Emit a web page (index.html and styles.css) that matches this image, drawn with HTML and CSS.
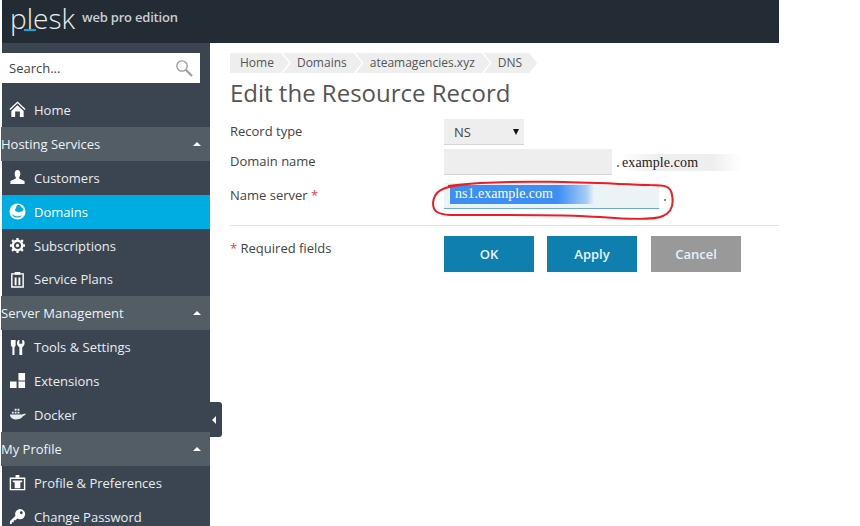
FILE: index.html
```html
<!DOCTYPE html>
<html lang="en">
<head>
<meta charset="utf-8">
<title>Edit the Resource Record</title>
<link rel="stylesheet" href="styles.css">
</head>
<body>
<div class="page">
  <header class="topbar">
    <div class="logo"><span class="logo-word">plesk</span><span class="logo-dash"></span></div>
    <span class="edition">web pro edition</span>
  </header>
  <div class="body-row">
    <aside class="sidebar">
      <div class="search"><span>Search...</span>
        <svg class="search-icon" viewBox="0 0 18 18" width="18" height="18"><circle cx="7" cy="7" r="5.2" fill="none" stroke="#9a9a9a" stroke-width="1.3"/><path d="M11 11l6 6" stroke="#9a9a9a" stroke-width="2"/></svg>
      </div>
      <nav>
        <a class="item"><svg class="ico" viewBox="0 0 18 18"><path d="M9 .5L.5 8.500l1 1L9 2.500l7.500 7 1-1zM2.500 10.500L9 4.500l6.500 6V17h-4v-6h-5v6h-4z" fill="#fff"/></svg>Home</a>
        <div class="group">Hosting Services<i class="caret"></i></div>
        <a class="item"><svg class="ico" viewBox="0 0 18 18"><path d="M9 1c2 0 3 1.500 3 4 0 2-1 3.500-1.500 4.500 0 1 4.500 2 6 3.500v3H1.500v-3c1.500-1.500 6-2.500 6-3.500C7 8.500 6 7 6 5c0-2.500 1-4 3-4z" fill="#fff"/></svg>Customers</a>
        <a class="item active"><svg class="ico" viewBox="0 0 18 18"><circle cx="9" cy="9" r="8.500" fill="#fff"/><path d="M10 2c3 0 2 2 4 3s2 3-1 4-3 1-5 0-2-2-1-3 0-4 3-4zM2 11c3 3 8 4 12 2-3 4-9 3-12-2z" fill="#00ade3"/></svg>Domains</a>
        <a class="item"><svg class="ico" viewBox="0 0 18 18"><circle cx="9" cy="9" r="5" fill="none" stroke="#fff" stroke-width="2.500"/><circle cx="9" cy="9" r="1.800" fill="#fff"/><path d="M9 1v3M9 14v3M1 9h3M14 9h3M3.300 3.300l2.200 2.200M12.500 12.500l2.200 2.200M3.300 14.700l2.200-2.200M12.500 5.500l2.200-2.200" stroke="#fff" stroke-width="2.400"/></svg>Subscriptions</a>
        <a class="item"><svg class="ico" viewBox="0 0 18 18"><path d="M3 3h12v14H3z" fill="none" stroke="#fff" stroke-width="1.500"/><path d="M6 1h6v3H6zM6 7h2v8H6zM10 7h2v8h-2z" fill="#fff"/></svg>Service Plans</a>
        <div class="group">Server Management<i class="caret"></i></div>
        <a class="item"><svg class="ico" viewBox="0 0 18 18"><path d="M2 1h5v6L5.800 9v8H3.600V9L2 7zM10 1l1 0v4h3V1h1c2 1 2 5 0 7l-1 1v8h-3V9l-1-1c-2-2-2-6 0-7z" fill="#fff"/></svg>Tools &amp; Settings</a>
        <a class="item"><svg class="ico" viewBox="0 0 18 18"><path d="M10 0h7v8h-7zM1 9h7v7H1zM10 9h7v7h-7z" fill="#fff"/></svg>Extensions</a>
        <a class="item"><svg class="ico" viewBox="0 0 18 18"><path d="M1 9h13c1-1 3-1 4-.500-1 1-2 2-3 2-2 4-9 4.500-11 3C2 12.500 1 11 1 9zM3 6h2v2H3zM6 6h2v2H6zM9 6h2v2H9zM6 3h2v2H6zM9 3h2v2H9z" fill="#e8ecef"/></svg>Docker</a>
        <div class="group">My Profile<i class="caret"></i></div>
        <a class="item"><svg class="ico" viewBox="0 0 18 18"><path d="M1.500 4.500h15v12h-15z" fill="none" stroke="#fff" stroke-width="1.500"/><path d="M7 1h4v3H7zM4 7h10v1.500l-2 .500v6H6V9L4 8.500z" fill="#fff"/></svg>Profile &amp; Preferences</a>
        <a class="item"><svg class="ico" viewBox="0 0 18 18"><path d="M11.500 1a5.500 5.500 0 1 1-2.800 10.200L7 13H5v2H3v2H1v-3l5.800-5.800A5.500 5.500 0 0 1 11.500 1z" fill="#fff"/><circle cx="13" cy="5" r="1.500" fill="#3b4551"/></svg>Change Password</a>
      </nav>
      <div class="collapse"><i></i></div>
    </aside>
    <main class="content">
      <ol class="crumbs">
        <li>Home</li><li>Domains</li><li>ateamagencies.xyz</li><li>DNS</li>
      </ol>
      <h1>Edit the Resource Record</h1>
      <form class="form">
        <div class="row row-type">
          <label>Record type</label>
          <div class="select">NS<i></i></div>
        </div>
        <div class="row row-domain">
          <label>Domain name</label>
          <div class="input short"></div>
          <span class="dot"></span>
          <span class="suffix">example.com</span>
        </div>
        <div class="row row-ns">
          <label>Name server <em>*</em></label>
          <div class="input long"><span class="selected">ns1.example.com</span></div>
          <span class="dot"></span>
        </div>
        <div class="actions">
          <span class="required"><em>*</em> Required fields</span>
          <div class="buttons">
            <span class="btn primary">OK</span>
            <span class="btn primary">Apply</span>
            <span class="btn muted">Cancel</span>
          </div>
        </div>
      </form>
      <svg class="scribble" viewBox="0 0 250 46" width="250" height="46"><path d="M38 7C8 9 2 15 1 26c0 9 5 11 17 12 50 0 110-1 150 2 25 2 55 3 63-1 9-4 11-11 9-21-1-9-7-10-22-10C158 6 108 3 48 6 33 7 23 8 16 9" fill="none" stroke="#ee1c25" stroke-width="2"/></svg>
    </main>
  </div>
</div>
</body>
</html>
```
FILE: styles.css
```css
* { box-sizing: border-box; }
html, body { margin: 0; height: 100%; overflow: hidden; background: #fff; }
body { font-family: "Open Sans", sans-serif; font-size: 13px; color: #444; }
.page { width: 777px; height: 526px; margin-left: 2px; display: flex; flex-direction: column; }
.topbar { height: 43px; flex: none; background: #232c35; display: flex; align-items: flex-start; padding-left: 8px; color: #d5d8db; }
.logo { position: relative; width: 68px; height: 43px; }
.logo-word { font-family: "Open Sans", sans-serif; font-weight: 300; font-size: 28px; line-height: 36px; color: #eceef0; }
.logo-dash { position: absolute; left: 14px; top: 29px; width: 12px; height: 2px; background: #14a7e0; }
.edition { font-size: 13px; font-weight: 600; line-height: 16px; margin: 9px 0 0 4px; color: #c9ced2; letter-spacing: -.2px; }
.body-row { flex: 1; display: flex; min-height: 0; }
.sidebar { position: relative; width: 208px; flex: none; background: #3b4551; padding-top: 10px; color: #e8edf0; }
.search { height: 30px; width: 198px; background: #fff; color: #444; display: flex; align-items: center; justify-content: space-between; padding: 0 7px 0 7px; font-size: 13px; margin-bottom: 10px; }
.search-icon { margin-top: -1px; }
.item { height: 33.900px; display: flex; align-items: center; padding-left: 7px; gap: 8px; color: #e8edf0; font-size: 13px; }
.ico { width: 17px; height: 17px; flex: none; }
.item.active { background: #00ade3; color: #fff; }
.group { height: 33.900px; display: flex; align-items: center; justify-content: space-between; background: #525d66; color: #f0f3f5; font-size: 13px; margin-left: -1px; padding-right: 9px; }
.caret { width: 0; height: 0; border: 4px solid transparent; border-top: 0; border-bottom: 4px solid #fff; }
.collapse { position: absolute; left: 208px; top: 359px; width: 12px; height: 35px; background: #3b4551; border-radius: 0 3px 3px 0; display: flex; align-items: center; padding-left: 2px; }
.collapse i { width: 0; height: 0; border: 4px solid transparent; border-left: 0; border-right: 4px solid #fff; }
.content { position: relative; flex: 1; padding: 10px 0 0 20px; }
.crumbs { list-style: none; margin: 0; padding: 0; display: flex; height: 20px; font-size: 12px; color: #555; }
.crumbs li { background: #eee; line-height: 20px; padding: 0 15px 0 14px; margin-left: -6px; clip-path: polygon(0 0, calc(100% - 8px) 0, 100% 50%, calc(100% - 8px) 100%, 0 100%, 8px 50%); }
.crumbs li:first-child { padding-left: 10px; margin-left: 0; clip-path: polygon(0 0, calc(100% - 8px) 0, 100% 50%, calc(100% - 8px) 100%, 0 100%); }
h1 { margin: 5px 0 0; font-size: 24px; font-weight: 400; line-height: 30px; color: #555; }
.form { margin-top: 11px; position: relative; }
.row { display: flex; align-items: flex-start; }
.row label { width: 214px; flex: none; line-height: 18px; font-size: 13px; color: #444; }
em { font-style: normal; color: #d8474c; }
.row-type { height: 30px; }
.row-type label { padding-top: 3px; }
.select { width: 80px; height: 26px; background: #eee; border-bottom: 1px solid #d5d5d5; font-size: 13px; line-height: 26px; padding-left: 10px; position: relative; color: #444; }
.select i { position: absolute; right: 5px; top: 10px; width: 0; height: 0; border: 3.500px solid transparent; border-top: 6px solid #111; border-bottom: 0; }
.row-domain { height: 34px; position: relative; }
.row-domain label { padding-top: 3px; }
.row-ns label { padding-top: 3px; }
.input { height: 26px; background: #eee; border-bottom: 1px solid #d5d5d5; }
.short { width: 168px; }
.long { width: 215px; background: #ecf3f7; border-bottom: 1px solid #6dacc9; padding: 2px 0 0 6px; }
.dot { width: 2px; height: 2px; background: #7f8f9f; margin: 16px 0 0 5px; flex: none; }
.suffix { font-family: "Liberation Serif", serif; font-size: 14px; letter-spacing: .1px; color: #222; height: 17px; line-height: 17px; margin: 5px 0 0 0; padding: 0 44px 0 3px; background: linear-gradient(90deg, #fff, #f0f0f0 30%, #eee 75%, #fff); }
.row-ns { height: 42px; }
.selected { display: block; width: 144px; height: 19px; padding-left: 5px; font-family: "Liberation Serif", serif; font-size: 14px; line-height: 17px; color: #fff; background: linear-gradient(90deg, #3d8ff5, #3d8ff5 75%, #a8cdf5 95%, #ecf3f7); }
.actions { border-top: 1px solid #e3e3e3; display: flex; align-items: flex-start; padding-top: 10px; }
.required { width: 214px; flex: none; line-height: 24px; font-size: 13px; color: #444; }
.buttons { display: flex; gap: 13px; }
.btn { width: 90px; height: 36px; display: flex; align-items: center; justify-content: center; font-weight: 600; font-size: 13px; color: #e8f2f6; }
.primary { background: #0f7fb0; }
.muted { background: #999; margin-left: 1px; }
.scribble { position: absolute; left: 222px; top: 134px; pointer-events: none; }
```
